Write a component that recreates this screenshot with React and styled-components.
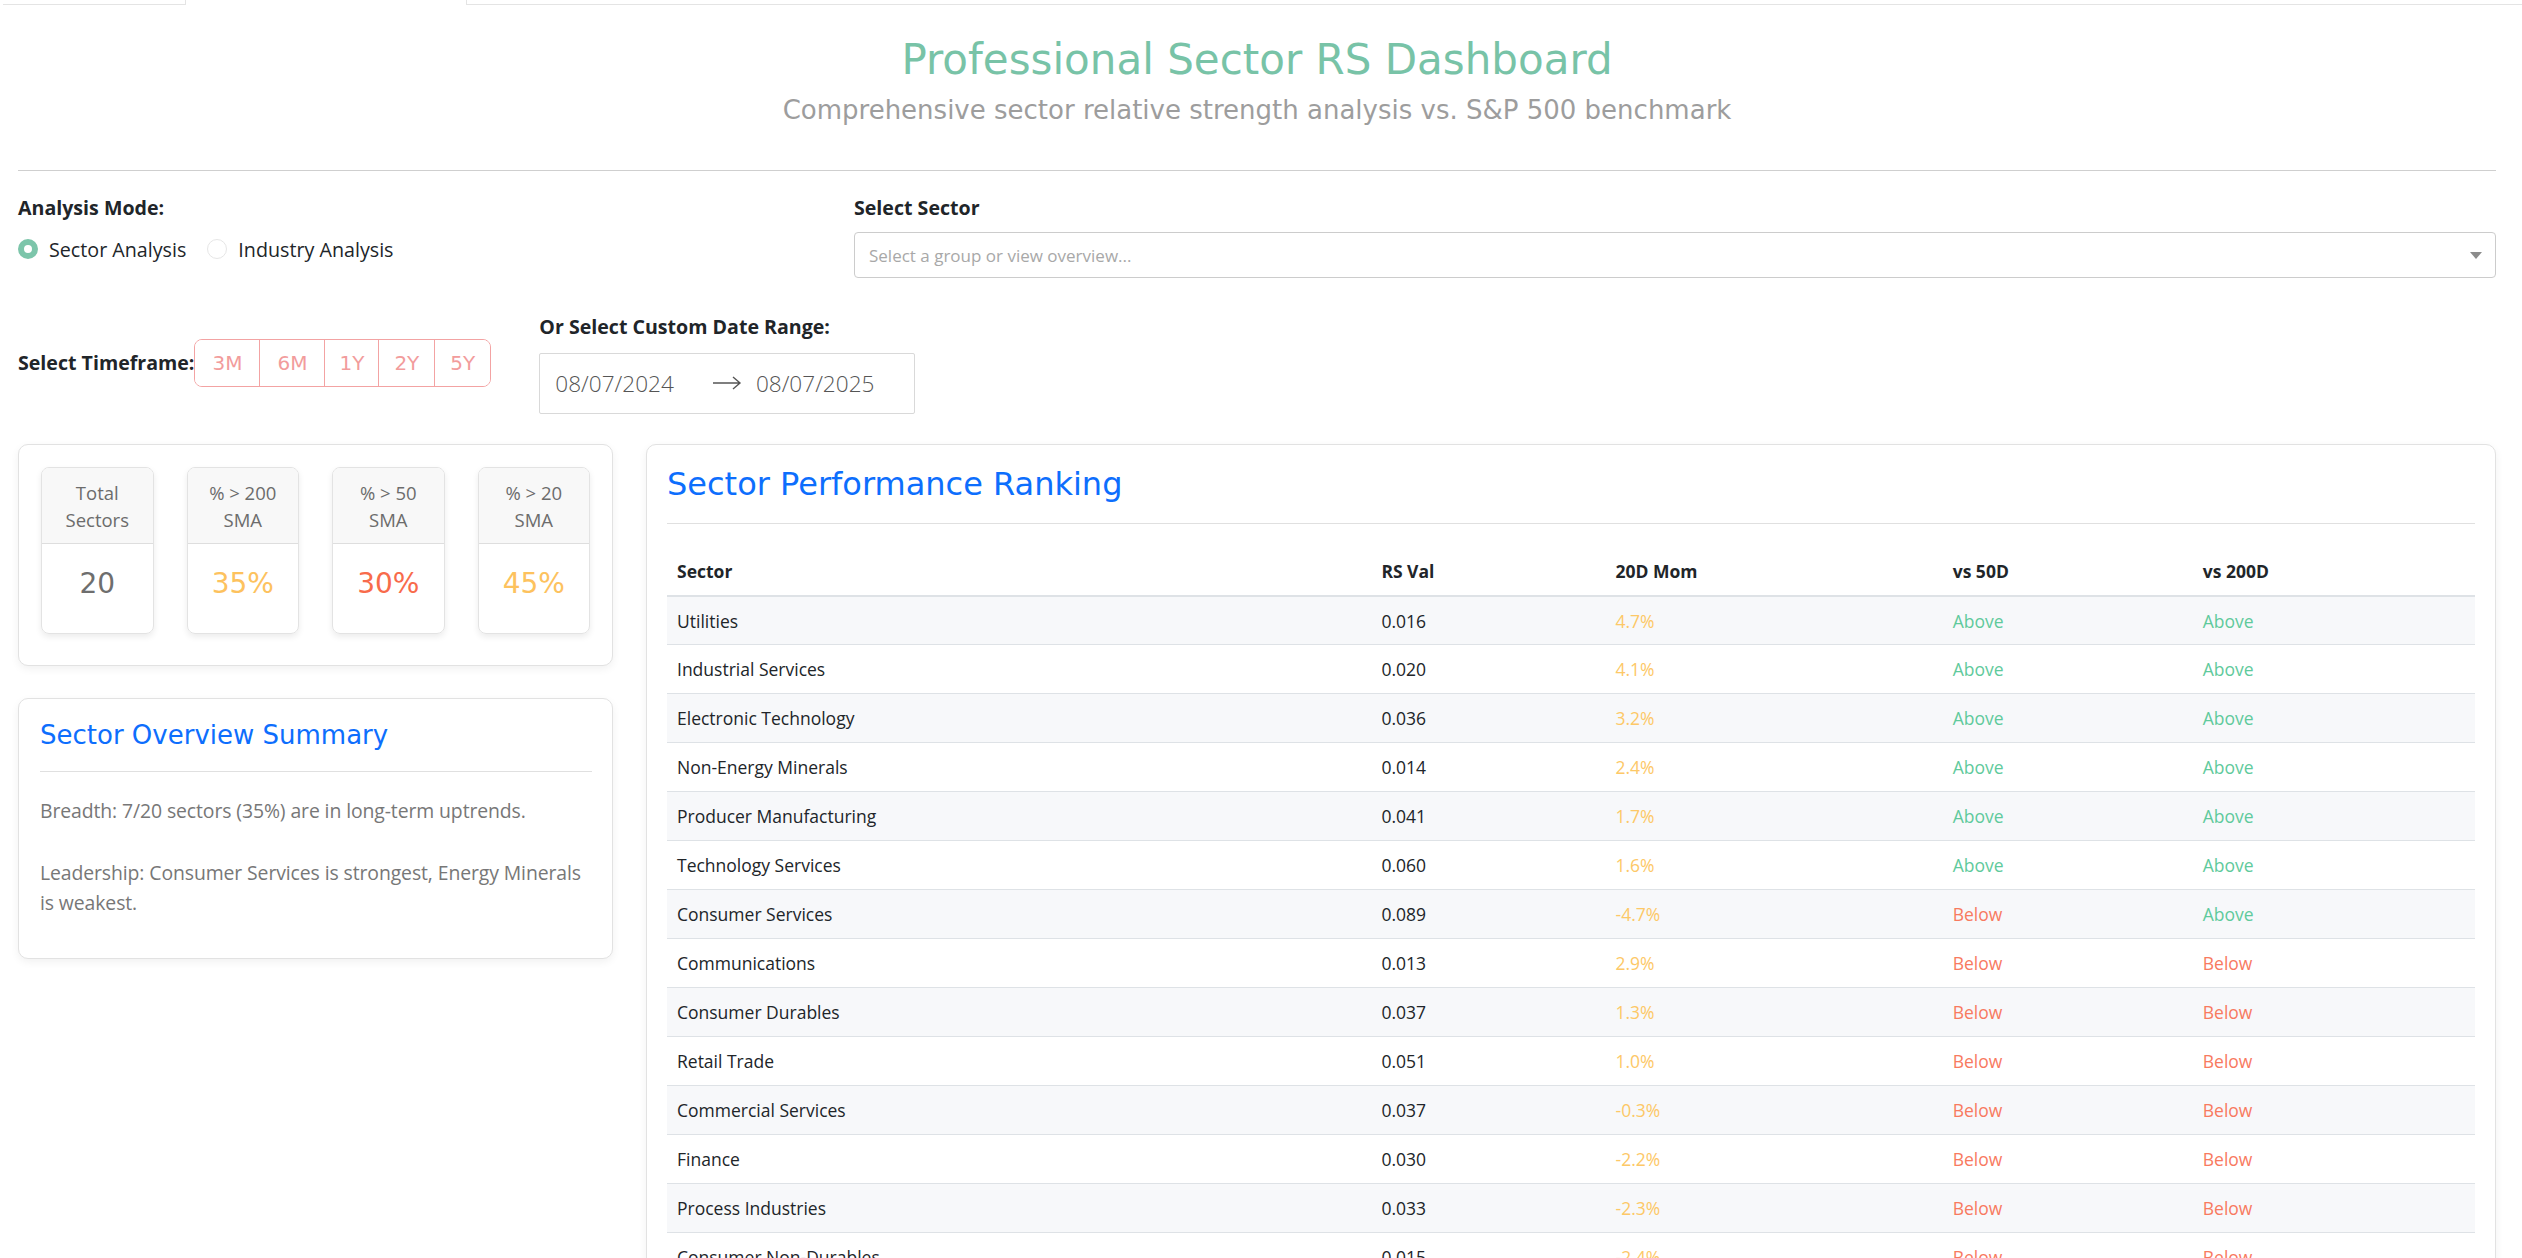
import React from 'react';
import styled, { createGlobalStyle, css } from 'styled-components';

const GlobalStyle = createGlobalStyle`
  * {
    box-sizing: border-box;
  }

  body {
    margin: 0;
    background: #fff;
    font-family: "Open Sans", "Liberation Sans", sans-serif;
    color: #212529;
  }
`;

const display = `"DejaVu Sans", "Liberation Sans", sans-serif`;

const TabBar = styled.div`
  display: flex;
  height: 5px;
  margin-left: 3px;
`;

const Tab = styled.div`
  width: ${({ $width }) => $width}px;
  border-bottom: 1px solid #e4e4e4;

  ${({ $active }) =>
    $active &&
    css`
      border-bottom: none;
      border-left: 1px solid #e4e4e4;
      border-right: 1px solid #e4e4e4;
    `}
`;

const TabFill = styled.div`
  flex: 1;
  border-bottom: 1px solid #e4e4e4;
`;

const Page = styled.div`
  padding: 0 26px 40px 18px;
`;

const Header = styled.header`
  text-align: center;
  padding: 30px 0 43px;
  border-bottom: 1px solid #cfcfcf;
`;

const Title = styled.h1`
  margin: 0;
  font-family: ${display};
  font-size: 42px;
  font-weight: 400;
  line-height: 1.2;
  color: #78c3a7;
`;

const Subtitle = styled.p`
  margin: 10px 0 0;
  font-family: ${display};
  font-size: 26px;
  line-height: 1.2;
  color: #9d9d9d;
`;

const Controls = styled.section`
  display: grid;
  grid-template-columns: 803px 1fr;
  column-gap: 33px;
  margin-top: 23px;
`;

const Label = styled.div`
  font-size: 19.6px;
  font-weight: 700;
  line-height: 28.5px;
  color: #212529;
`;

const RadioRow = styled.div`
  display: flex;
  align-items: center;
  margin-top: 13px;
  height: 28px;
`;

const RadioItem = styled.label`
  display: flex;
  align-items: center;
  gap: 11px;
  margin-right: 21px;
  font-size: 19.7px;
  color: #212529;
`;

const RadioDot = styled.span`
  width: 20px;
  height: 20px;
  border-radius: 50%;
  background: #fff;
  border: ${({ $checked }) => ($checked ? '6px solid #7cc5aa' : '1px solid #e6e6e6')};
`;

const SelectBox = styled.div`
  margin-top: 10px;
  height: 46px;
  border: 1px solid #cccccc;
  border-radius: 4px;
  display: flex;
  align-items: center;
  justify-content: space-between;
  padding: 0 13px 0 14px;
  font-size: 17px;
  color: #a8a8a8;
`;

const TimeRow = styled.section`
  display: flex;
  align-items: center;
  gap: 48px;
  margin-top: 35px;
`;

const TimeGroup = styled.div`
  display: flex;
  align-items: center;
`;

const ButtonGroup = styled.div`
  display: flex;
  height: 48px;
  border: 1px solid #f3a3a3;
  border-radius: 8px;
  overflow: hidden;
`;

const TimeButton = styled.button`
  display: flex;
  align-items: center;
  padding: 0 ${({ $pad }) => $pad}px;
  border: none;
  border-left: 1px solid #f3a3a3;
  background: #fff;
  font-family: ${display};
  font-size: 20px;
  color: #f29c9c;

  &:first-child {
    border-left: none;
  }
`;

const DateColumn = styled.div`
  display: flex;
  flex-direction: column;
`;

const DateBox = styled.div`
  display: flex;
  align-items: center;
  width: 376px;
  height: 61px;
  margin-top: 11px;
  padding: 0 15px;
  border: 1px solid #d9d9d9;
  border-radius: 2px;
`;

const DateText = styled.span`
  font-size: 22.6px;
  font-weight: 300;
  color: #555;
`;

const ArrowIcon = styled.svg`
  margin: 0 14px 0 38px;
`;

const Main = styled.main`
  display: grid;
  grid-template-columns: 595px 1fr;
  gap: 33px;
  align-items: start;
  margin-top: 30px;
`;

const LeftColumn = styled.div`
  display: flex;
  flex-direction: column;
  gap: 32px;
`;

const Card = styled.div`
  background: #fff;
  border: 1px solid #e2e2e2;
  border-radius: 10px;
  box-shadow: 0 3px 8px rgba(0, 0, 0, 0.06);
  padding: ${({ $padding }) => $padding};
`;

const StatGrid = styled.div`
  display: grid;
  grid-template-columns: repeat(4, 1fr);
  gap: 33px;
`;

const StatTile = styled.div`
  border: 1px solid #e3e3e3;
  border-radius: 8px;
  overflow: hidden;
  box-shadow: 0 3px 6px rgba(0, 0, 0, 0.08);
`;

const StatHead = styled.div`
  height: 76px;
  display: flex;
  align-items: center;
  justify-content: center;
  padding: 2px 10px 0;
  text-align: center;
  background: #f8f8f8;
  border-bottom: 1px solid #dedede;
  font-size: 18.5px;
  line-height: 27px;
  color: #6c6c6c;
`;

const StatValue = styled.div`
  height: 89px;
  padding-top: 23px;
  text-align: center;
  font-family: ${display};
  font-size: 28px;
  line-height: 1.2;
  color: ${({ $color }) => $color};
`;

const CardTitle = styled.h2`
  margin: 0;
  padding-bottom: 20px;
  border-bottom: 1px solid #e0e0e0;
  font-family: ${display};
  font-size: ${({ $size }) => $size}px;
  font-weight: 400;
  line-height: 1.2;
  color: #0d6efd;
`;

const SummaryText = styled.p`
  margin: ${({ $first }) => ($first ? '24px' : '32px')} 0 0;
  font-size: 19.4px;
  letter-spacing: -0.1px;
  line-height: 30px;
  color: #777;
`;

const Table = styled.table`
  width: 100%;
  margin-top: 23px;
  border-collapse: collapse;
  table-layout: fixed;
`;

const Th = styled.th`
  width: ${({ $width }) => $width}px;
  height: 49px;
  padding: 0 10px;
  text-align: left;
  font-size: 17.5px;
  font-weight: 700;
  color: #212529;
  border-bottom: 2px solid #dee2e6;
`;

const Row = styled.tr`
  &:nth-child(odd) {
    background: #f7f8fa;
  }
`;

const Td = styled.td`
  height: 49px;
  padding: 0 10px;
  font-size: 17.5px;
  color: ${({ $color }) => $color || '#212529'};
  border-bottom: 1px solid #dee2e6;
`;

const MOM = '#fdc867';
const ABOVE = '#5fca9c';
const BELOW = '#f87a5f';

const timeframes = [
  { label: '3M', pad: 17 },
  { label: '6M', pad: 17 },
  { label: '1Y', pad: 14 },
  { label: '2Y', pad: 15 },
  { label: '5Y', pad: 15 },
];

const stats = [
  { label: 'Total Sectors', value: '20', color: '#6e6e6e' },
  { label: '% > 200 SMA', value: '35%', color: '#fdc25e' },
  { label: '% > 50 SMA', value: '30%', color: '#f86b4b' },
  { label: '% > 20 SMA', value: '45%', color: '#fdc25e' },
];

const sectors = [
  ['Utilities', '0.016', '4.7%', true, true],
  ['Industrial Services', '0.020', '4.1%', true, true],
  ['Electronic Technology', '0.036', '3.2%', true, true],
  ['Non-Energy Minerals', '0.014', '2.4%', true, true],
  ['Producer Manufacturing', '0.041', '1.7%', true, true],
  ['Technology Services', '0.060', '1.6%', true, true],
  ['Consumer Services', '0.089', '-4.7%', false, true],
  ['Communications', '0.013', '2.9%', false, false],
  ['Consumer Durables', '0.037', '1.3%', false, false],
  ['Retail Trade', '0.051', '1.0%', false, false],
  ['Commercial Services', '0.037', '-0.3%', false, false],
  ['Finance', '0.030', '-2.2%', false, false],
  ['Process Industries', '0.033', '-2.3%', false, false],
  ['Consumer Non-Durables', '0.015', '-2.4%', false, false],
  ['Health Technology', '0.022', '-2.9%', false, false],
  ['Health Services', '0.044', '-3.1%', false, false],
  ['Distribution Services', '0.028', '-3.5%', false, false],
  ['Transportation', '0.019', '-4.0%', false, false],
  ['Miscellaneous', '0.011', '-4.3%', false, false],
  ['Energy Minerals', '0.007', '-5.6%', false, false],
];

const columns = [
  { label: 'Sector', width: 704 },
  { label: 'RS Val', width: 234 },
  { label: '20D Mom', width: 337 },
  { label: 'vs 50D', width: 250 },
  { label: 'vs 200D', width: 282 },
];

const Trend = ({ above }) => (
  <Td $color={above ? ABOVE : BELOW}>{above ? 'Above' : 'Below'}</Td>
);

export default function App() {
  return (
    <>
      <GlobalStyle />
      <TabBar>
        <Tab $width={182} />
        <Tab $width={282} $active />
        <TabFill />
      </TabBar>
      <Page>
        <Header>
          <Title>Professional Sector RS Dashboard</Title>
          <Subtitle>Comprehensive sector relative strength analysis vs. S&amp;P 500 benchmark</Subtitle>
        </Header>

        <Controls>
          <div>
            <Label>Analysis Mode:</Label>
            <RadioRow>
              <RadioItem>
                <RadioDot $checked />
                Sector Analysis
              </RadioItem>
              <RadioItem>
                <RadioDot />
                Industry Analysis
              </RadioItem>
            </RadioRow>
          </div>
          <div>
            <Label>Select Sector</Label>
            <SelectBox>
              <span>Select a group or view overview...</span>
              <svg width="12" height="7" viewBox="0 0 12 7">
                <polygon points="0,0 12,0 6,7" fill="#8c8c8c" />
              </svg>
            </SelectBox>
          </div>
        </Controls>

        <TimeRow>
          <TimeGroup>
            <Label>Select Timeframe:</Label>
            <ButtonGroup>
              {timeframes.map((t) => (
                <TimeButton key={t.label} $pad={t.pad}>
                  {t.label}
                </TimeButton>
              ))}
            </ButtonGroup>
          </TimeGroup>
          <DateColumn>
            <Label>Or Select Custom Date Range:</Label>
            <DateBox>
              <DateText>08/07/2024</DateText>
              <ArrowIcon width="30" height="16" viewBox="0 0 30 16">
                <path d="M1 8 H28 M21 2 L28 8 L21 14" fill="none" stroke="#555" strokeWidth="1.4" />
              </ArrowIcon>
              <DateText>08/07/2025</DateText>
            </DateBox>
          </DateColumn>
        </TimeRow>

        <Main>
          <LeftColumn>
            <Card $padding="22px 22px 31px">
              <StatGrid>
                {stats.map((s) => (
                  <StatTile key={s.label}>
                    <StatHead>{s.label}</StatHead>
                    <StatValue $color={s.color}>{s.value}</StatValue>
                  </StatTile>
                ))}
              </StatGrid>
            </Card>
            <Card $padding="21px 20px 40px 21px">
              <CardTitle $size={26}>Sector Overview Summary</CardTitle>
              <SummaryText $first>
                Breadth: 7/20 sectors (35%) are in long-term uptrends.
              </SummaryText>
              <SummaryText>
                Leadership: Consumer Services is strongest, Energy Minerals is weakest.
              </SummaryText>
            </Card>
          </LeftColumn>

          <Card $padding="20px 20px 24px">
            <CardTitle $size={32}>Sector Performance Ranking</CardTitle>
            <Table>
              <thead>
                <tr>
                  {columns.map((c) => (
                    <Th key={c.label} $width={c.width}>
                      {c.label}
                    </Th>
                  ))}
                </tr>
              </thead>
              <tbody>
                {sectors.map(([name, rs, mom, v50, v200]) => (
                  <Row key={name}>
                    <Td>{name}</Td>
                    <Td>{rs}</Td>
                    <Td $color={MOM}>{mom}</Td>
                    <Trend above={v50} />
                    <Trend above={v200} />
                  </Row>
                ))}
              </tbody>
            </Table>
          </Card>
        </Main>
      </Page>
    </>
  );
}
